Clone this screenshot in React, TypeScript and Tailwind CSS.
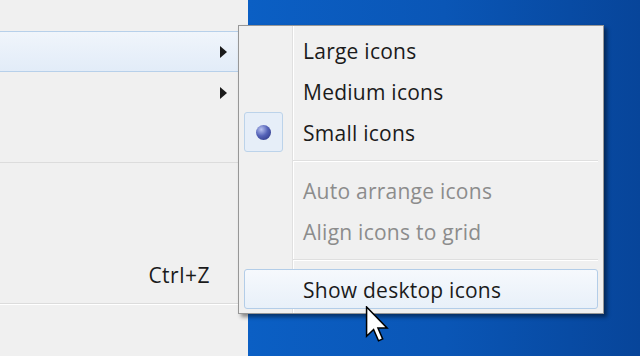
const font = { fontFamily: '"Open Sans", "Noto Sans", sans-serif' };

function Arrow() {
  return (
    <svg width="8" height="12" viewBox="0 0 8 12" className="mr-[10px]">
      <path d="M0 0 L7 6 L0 12 Z" fill="#1a1a1a" />
    </svg>
  );
}

function LeftMenu() {
  return (
    <div className="w-[248px] h-full bg-[#f0f0f0] flex flex-col pt-[31px]">
      <div className="h-[41px] mr-[10px] flex items-center justify-end border-y border-[#b7d0ea] bg-gradient-to-b from-[#f0f5fb] to-[#e2ecf8]">
        <Arrow />
      </div>
      <div className="h-[41px] mr-[10px] flex items-center justify-end">
        <Arrow />
      </div>
      <div className="h-[41px]" />
      <div className="h-[18px] flex items-center">
        <div className="w-full h-[2px] border-t border-[#dcdcdc] border-b-white" />
      </div>
      <div className="h-[41px]" />
      <div className="h-[41px]" />
      <div className="h-[41px] flex items-center justify-end pt-[3px] pr-[38px] text-[21px] tracking-[0.5px] text-[#1b1b1b]">Ctrl+Z</div>
      <div className="h-[18px] flex items-center">
        <div className="w-full h-[2px] border-t border-[#dcdcdc] border-b border-b-white" />
      </div>
    </div>
  );
}

function Item({ label, disabled, checked, hover }: { label: string; disabled?: boolean; checked?: boolean; hover?: boolean }) {
  return (
    <div
      className={`h-[40px] mx-[5px] flex items-center rounded-[3px] border ${
        hover ? 'border-[#b3cde8] bg-gradient-to-b from-[#f6f9fd] to-[#e8f0f9]' : 'border-transparent'
      }`}
    >
      <div className="w-[48px] h-full flex items-center">
        {checked && (
          <div className="w-[39px] h-[40px] -ml-[1px] rounded-[3px] border border-[#bcd3ea] bg-[#e6eef8] flex items-center justify-center">
            <div className="w-[15px] h-[15px] rounded-full bg-[radial-gradient(circle_at_35%_30%,#b8c2f0_0%,#5563b8_45%,#262f7c_100%)]" />
          </div>
        )}
      </div>
      <span className={`ml-[10px] pt-[4px] text-[21px] tracking-[0.25px] ${disabled ? 'text-[#8c8c8c]' : 'text-[#1b1b1b]'}`}>{label}</span>
    </div>
  );
}

function Separator() {
  return (
    <div className="h-[18px] flex items-center pl-[54px] pr-[5px]">
      <div className="w-full border-t border-[#dfdfdf] border-b border-b-white" />
    </div>
  );
}

function SubMenu() {
  return (
    <div className="absolute left-[238px] top-[25px] w-[366px] h-[289px] bg-[#f0f0f0] border border-[#979797] shadow-[3px_3px_4px_rgba(0,0,0,0.45)] py-[4px]">
      <div className="absolute left-[53px] top-0 bottom-0 w-[2px] border-l border-[#e0e0e0] border-r border-r-white" />
      <div className="relative flex flex-col gap-[1px]">
        <Item label="Large icons" />
        <Item label="Medium icons" />
        <Item label="Small icons" checked />
      </div>
      <div className="relative">
        <Separator />
      </div>
      <div className="relative flex flex-col gap-[1px]">
        <Item label="Auto arrange icons" disabled />
        <Item label="Align icons to grid" disabled />
      </div>
      <div className="relative">
        <Separator />
      </div>
      <div className="relative">
        <Item label="Show desktop icons" hover />
      </div>
    </div>
  );
}

function Cursor() {
  return (
    <svg className="absolute left-[365px] top-[306px]" width="24" height="36" viewBox="0 0 12 19">
      <path d="M0.5 0.5 L0.5 16 L4.2 12.4 L6.8 18.4 L9 17.4 L6.5 11.6 L11.3 11.6 Z" fill="white" stroke="black" strokeWidth="0.8" strokeLinejoin="miter" />
    </svg>
  );
}

export default function App() {
  return (
    <div className="relative w-[640px] h-[356px] overflow-hidden flex" style={font}>
      <LeftMenu />
      <div className="flex-1 h-full bg-gradient-to-r from-[#0b5fc4] via-[#0a56b6] to-[#07459a]" />
      <SubMenu />
      <Cursor />
    </div>
  );
}
